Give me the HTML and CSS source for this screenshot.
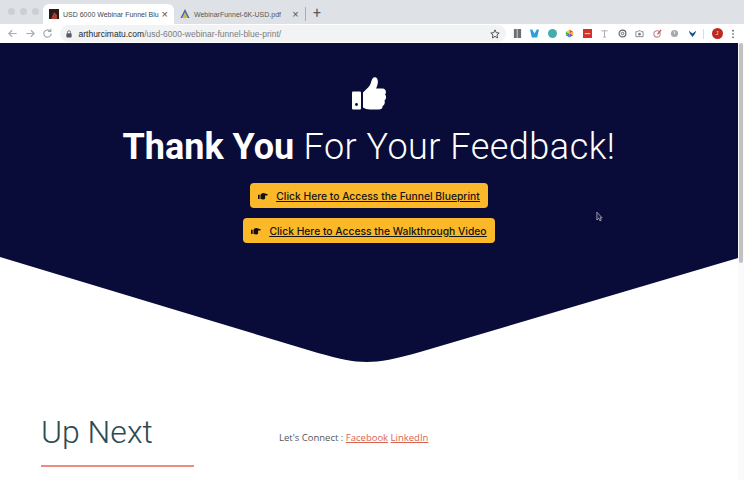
FILE: index.html
```html
<!DOCTYPE html>
<html>
<head>
    <meta charset="UTF-8">
    <title>USD 6000 Webinar Funnel Blueprint</title>
    <link rel="stylesheet" href="styles.css">
</head>
<body>
    <div class="tabstrip">
        <div class="lights"><span></span><span></span><span></span></div>
        <div class="tab tab-active">
            <svg class="favicon" viewBox="0 0 10 10"><rect width="10" height="10" fill="#2a1c1c"/><path d="M2 10 L5 3 L8 6 L8 10 Z" fill="#a5402f"/></svg>
            <span class="tab-title">USD 6000 Webinar Funnel Blu</span>
            <span class="tab-x">×</span>
        </div>
        <div class="tab">
            <svg class="favicon" viewBox="0 0 10 10"><path d="M5 0 L9.5 9 L0.5 9 Z" fill="#3b68b5"/><path d="M5 3 L8 9 L2 9 Z" fill="#e2b33f"/></svg>
            <span class="tab-title">WebinarFunnel-6K-USD.pdf</span>
            <span class="tab-x">×</span>
        </div>
        <span class="tab-sep"></span>
        <span class="tab-new">+</span>
    </div>

    <div class="toolbar">
        <svg class="nav-icon" viewBox="0 0 12 12"><path d="M10.5 6 H2 M5.5 2.5 L2 6 L5.5 9.5" fill="none" stroke="#a9acb0" stroke-width="1.3"/></svg>
        <svg class="nav-icon" viewBox="0 0 12 12"><path d="M1.5 6 H10 M6.5 2.5 L10 6 L6.5 9.5" fill="none" stroke="#a9acb0" stroke-width="1.3"/></svg>
        <svg class="nav-icon" viewBox="0 0 12 12"><path d="M10 6 A4 4 0 1 1 8.8 3.2 M9.6 0.8 V3.8 H6.6" fill="none" stroke="#a0a3a7" stroke-width="1.2"/></svg>
        <div class="omnibox">
            <svg class="lock" viewBox="0 0 8 10"><rect x="0.5" y="4" width="7" height="5.5" rx="1" fill="#55585c"/><path d="M2 4 V2.6 A2 2 0 0 1 6 2.6 V4" fill="none" stroke="#55585c"/></svg>
            <span class="url"><span class="url-host">arthurcimatu.com</span>/usd-6000-webinar-funnel-blue-print/</span>
            <svg class="star" viewBox="0 0 12 12"><path d="M6 1 L7.5 4.4 L11 4.8 L8.4 7.1 L9.1 10.7 L6 8.9 L2.9 10.7 L3.6 7.1 L1 4.8 L4.5 4.4 Z" fill="none" stroke="#45484c" stroke-width="1.1"/></svg>
        </div>
        <div class="extensions">
            <svg viewBox="0 0 10 10"><rect x="1" y="0" width="8" height="10" fill="#6d7073"/><rect x="4" y="0" width="1.5" height="10" fill="#b4b6b8"/></svg>
            <svg viewBox="0 0 10 10"><path d="M0 0.500 H2.500 L5 5 L7.500 0.500 H10 L8 9.500 H2 Z" fill="#2f9fd8"/></svg>
            <svg viewBox="0 0 10 10"><circle cx="5" cy="5" r="5" fill="#45adb0"/></svg>
            <svg viewBox="0 0 10 10"><path d="M5 0.5 L9 3 L5 5 Z" fill="#e2493a"/><path d="M9 3 L9 7 L5 5 Z" fill="#f0b83a"/><path d="M9 7 L5 9.5 L5 5 Z" fill="#7b4fb5"/><path d="M5 9.5 L1 7 L5 5 Z" fill="#3b7fd0"/><path d="M1 7 L1 3 L5 5 Z" fill="#45a850"/><path d="M1 3 L5 0.5 L5 5 Z" fill="#e8d53a"/></svg>
            <svg viewBox="0 0 10 10"><rect width="10" height="10" fill="#d3322c"/><rect x="2" y="4.5" width="6" height="1.2" fill="#f3d0ce"/></svg>
            <svg viewBox="0 0 10 10"><path d="M1.5 2 H8.5 M5 2 V9 M3.5 9 H6.5" fill="none" stroke="#a2a5a8"/></svg>
            <svg viewBox="0 0 10 10"><circle cx="5" cy="5" r="3.8" fill="none" stroke="#5f6266" stroke-width="1.3"/><circle cx="5" cy="5" r="1.4" fill="none" stroke="#5f6266"/></svg>
            <svg viewBox="0 0 10 10"><path d="M1 3 H3 L3.8 2 H6.2 L7 3 H9 V8.5 H1 Z" fill="none" stroke="#7f8286"/><circle cx="5" cy="5.7" r="1.5" fill="#7f8286"/></svg>
            <svg viewBox="0 0 10 10"><circle cx="4.5" cy="5.5" r="3.5" fill="none" stroke="#b98a90" stroke-width="1.2"/><path d="M5 6 L9 1" stroke="#c9424e" stroke-width="1.3"/></svg>
            <svg viewBox="0 0 10 10"><circle cx="5" cy="5" r="4" fill="#a7a9ac"/><path d="M5 2.5 V5.5" stroke="#eceef0" stroke-width="1.1"/></svg>
            <svg viewBox="0 0 10 10"><path d="M1 2 L5 5 L9 2 L8 5 L5 9 L2 5 Z" fill="#1d4f8a"/></svg>
            <span class="ext-sep"></span>
            <span class="avatar">J</span>
            <svg class="kebab" viewBox="0 0 4 12"><circle cx="2" cy="2" r="1" fill="#4a4d50"/><circle cx="2" cy="6" r="1" fill="#4a4d50"/><circle cx="2" cy="10" r="1" fill="#4a4d50"/></svg>
        </div>
    </div>

    <div class="viewport">
        <div class="page">
            <section class="hero">
                <svg class="thumb" viewBox="0 0 34 33">
                    <rect x="0" y="15" width="9" height="18" rx="1" fill="#fff"/>
                    <circle cx="4.5" cy="28" r="1.4" fill="#090c38"/>
                    <path d="M11 16 C15 12 18 10 19 6 C20 1 22 0 24 1 C27 3 26 8 24 12 L31 12 C35 13 34 17 33 18 C35 20 34 23 32.500 24 C33.500 27 32 29 30.500 29.500 C31 32 29 33 27 33 L18 33 C15 33 13 32 11 31 Z" fill="#fff"/>
                </svg>
                <h1 class="hero-title"><strong>Thank You</strong> For Your Feedback!</h1>
                <a class="cta cta-first" href="#">
                    <svg class="hand" viewBox="0 0 12 9"><path d="M0 3 H2 V8 H0 Z M3 3 C4 2 5 1 6.500 1 L11.500 2.500 C12 3 11.500 3.800 11 3.800 L8.500 3.800 L8.500 7.500 C8 8.500 6 9 4.500 8.500 L3 7.800 Z" fill="#111"/></svg>
                    <span class="cta-text">Click Here to Access the Funnel Blueprint</span>
                </a>
                <a class="cta" href="#">
                    <svg class="hand" viewBox="0 0 12 9"><path d="M0 3 H2 V8 H0 Z M3 3 C4 2 5 1 6.500 1 L11.500 2.500 C12 3 11.500 3.800 11 3.800 L8.500 3.800 L8.500 7.500 C8 8.500 6 9 4.500 8.500 L3 7.800 Z" fill="#111"/></svg>
                    <span class="cta-text">Click Here to Access the Walkthrough Video</span>
                </a>
            </section>
            <svg class="hero-curve" viewBox="0 0 738 106" preserveAspectRatio="none">
                <path d="M0 0 H738 V2 L420 96 C395 103 380 106 367 106 C352 106 340 103 318 97 L0 1 Z" fill="#090c38"/>
            </svg>
            <section class="next">
                <div class="next-left">
                    <h2 class="next-title">Up Next</h2>
                    <div class="next-rule"></div>
                </div>
                <p class="connect">Let's Connect : <a href="#">Facebook</a> <a href="#">LinkedIn</a></p>
            </section>
            <svg class="cursor" viewBox="0 0 8 12"><path d="M1 1 V10 L3 8 L4.500 11 L6 10.300 L4.600 7.500 L7 7.500 Z" fill="#1b1d3f" stroke="#c9cad2" stroke-width="0.8"/></svg>
        </div>
        <div class="scrollbar"><div class="scroll-thumb"></div></div>
    </div>
</body>
</html>
```

FILE: styles.css
```css
html, body {
    margin: 0;
    height: 480px;
    overflow: hidden;
}

body {
    font-family: 'Roboto', sans-serif;
    background-color: #fff;
}

.tabstrip {
    height: 24px;
    background-color: #dee1e6;
    display: flex;
    align-items: flex-end;
    box-sizing: border-box;
    padding-left: 43px;
    position: relative;
}

.lights {
    position: absolute;
    left: 8px;
    top: 8px;
    display: flex;
    gap: 5px;
}

.lights span {
    width: 7px;
    height: 7px;
    border-radius: 50%;
    background-color: #cdcfd3;
}

.tab {
    width: 131px;
    height: 20px;
    display: flex;
    align-items: center;
    box-sizing: border-box;
    padding-left: 6px;
    font-size: 7px;
    color: #55585c;
    font-family: 'Liberation Sans', sans-serif;
}

.tab-active {
    background-color: #fff;
    border-radius: 6px 6px 0 0;
    color: #44474a;
}

.favicon {
    width: 10px;
    height: 10px;
    margin-right: 4px;
    flex-shrink: 0;
}

.tab-title {
    flex: 1;
    white-space: nowrap;
}

.tab-x {
    width: 13px;
    font-size: 11px;
    color: #505357;
    text-align: center;
    margin-right: 3px;
}

.tab-sep {
    width: 1px;
    height: 14px;
    margin: 0 0 3px 0;
    background-color: #a9acb0;
}

.tab-new {
    margin: 0 0 2px 7px;
    font-size: 14px;
    line-height: 18px;
    color: #55585c;
}

.toolbar {
    height: 19px;
    background-color: #fff;
    display: flex;
    align-items: center;
    padding-left: 7px;
}

.nav-icon {
    width: 11px;
    height: 11px;
    margin-right: 6.500px;
}

.omnibox {
    width: 446px;
    height: 17px;
    border-radius: 9px;
    background-color: #f1f3f4;
    display: flex;
    align-items: center;
    padding: 0 3px 0 6px;
    box-sizing: border-box;
}

.lock {
    width: 6px;
    height: 8px;
    margin-right: 7px;
}

.url {
    flex: 1;
    font-family: 'Liberation Sans', sans-serif;
    font-size: 8.5px;
    color: #7b7e82;
}

.url-host {
    color: #26282b;
}

.star {
    width: 10px;
    height: 10px;
    margin-right: 3px;
}

.extensions {
    display: flex;
    align-items: center;
    margin-left: 7px;
    gap: 8.500px;
}

.extensions svg {
    width: 9px;
    height: 9px;
}

.ext-sep {
    width: 1px;
    height: 10px;
    margin: 0 -2px;
    background-color: #dadce0;
}

.avatar {
    width: 11px;
    height: 11px;
    border-radius: 50%;
    background-color: #c0281f;
    color: #f6d5d2;
    font-size: 6px;
    line-height: 11px;
    text-align: center;
    font-family: 'Liberation Sans', sans-serif;
    margin-left: 1px;
}

.extensions .kebab {
    width: 4px;
    height: 10px;
}

.viewport {
    display: flex;
    height: 437px;
}

.page {
    flex: 1;
    position: relative;
    overflow: hidden;
}

.hero {
    background-color: #090c38;
    height: 213px;
    display: flex;
    flex-direction: column;
    align-items: center;
    box-sizing: border-box;
    padding-top: 33px;
}

.thumb {
    width: 34px;
    height: 34px;
}

.hero-title {
    margin: 14px 0 0;
    color: #fff;
    font-size: 36px;
    line-height: 46px;
    font-weight: 300;
    letter-spacing: 0.5px;
    white-space: nowrap;
}

.hero-title strong {
    font-weight: 700;
    letter-spacing: 0;
}

.cta {
    display: flex;
    align-items: center;
    height: 25px;
    margin-top: 10px;
    padding: 0 8px;
    background-color: #fbb829;
    border-radius: 4px;
    color: #151515;
    font-family: 'Inter', sans-serif;
    font-size: 10.300px;
    font-weight: 500;
}

.cta-first {
    margin-top: 13px;
}

.hand {
    width: 10px;
    height: 8px;
    margin-right: 8px;
}

.cta-text {
    text-decoration: underline;
    white-space: nowrap;
}

.hero-curve {
    display: block;
    width: 100%;
    height: 106px;
}

.next {
    display: flex;
    padding: 49px 0 0 41px;
    align-items: flex-start;
}

.next-left {
    width: 153px;
}

.next-title {
    margin: 0;
    font-size: 32px;
    line-height: 42px;
    font-weight: 300;
    color: #2d4a4f;
}

.next-rule {
    height: 2px;
    margin-top: 12px;
    background-color: #ec8d7f;
}

.connect {
    margin: 19px 0 0 85px;
    font-family: 'Open Sans', sans-serif;
    font-size: 9.500px;
    line-height: 16px;
    color: #555;
}

.connect a {
    color: #d9634f;
}

.cursor {
    position: absolute;
    left: 596px;
    top: 168px;
    width: 7px;
    height: 11px;
}

.scrollbar {
    width: 6px;
    background-color: #fafafa;
}

.scroll-thumb {
    width: 4px;
    height: 220px;
    margin-left: 1px;
    border-radius: 2px;
    background-color: #c1c1c1;
}
```
